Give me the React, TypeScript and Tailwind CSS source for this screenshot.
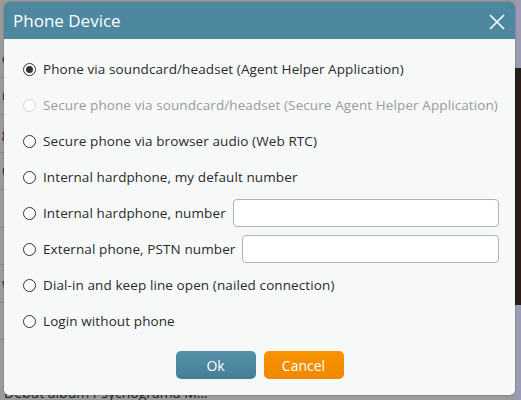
import { useState } from 'react'

interface Option {
  id: string
  label: string
  disabled?: boolean
  input?: string
}

const options: Option[] = [
  { id: 'helper', label: 'Phone via soundcard/headset (Agent Helper Application)' },
  { id: 'secure', label: 'Secure phone via soundcard/headset (Secure Agent Helper Application)', disabled: true },
  { id: 'webrtc', label: 'Secure phone via browser audio (Web RTC)' },
  { id: 'default', label: 'Internal hardphone, my default number' },
  { id: 'internal', label: 'Internal hardphone, number', input: 'ml-[7px]' },
  { id: 'pstn', label: 'External phone, PSTN number', input: 'ml-[7px]' },
  { id: 'nailed', label: 'Dial-in and keep line open (nailed connection)' },
  { id: 'none', label: 'Login without phone' },
]

function Radio({ checked, disabled }: { checked: boolean; disabled?: boolean }) {
  return (
    <span
      className={`w-[13px] h-[13px] rounded-full border flex items-center justify-center shrink-0 bg-white ${
        disabled ? 'border-[#d4d4d4]' : 'border-[#333]'
      }`}
    >
      {checked && <span className="w-[7px] h-[7px] rounded-full bg-[#333]" />}
    </span>
  )
}

export default function App() {
  const [selected, setSelected] = useState('helper')

  return (
    <div className="relative w-[521px] h-[400px] overflow-hidden bg-[#9b9b9b] font-['Open_Sans',sans-serif]">
      {/* dimmed page behind the dialog */}
      <div className="flex h-full">
        <div className="flex-1 flex flex-col pt-[40px] text-[13px] text-[#222]">
          {['e', 'r', 'g', 'u', '', '', 'w', ''].map((t, i) => (
            <div key={i} className="h-[38px] border-b border-[#8a8a8a] flex items-center px-[2px]">
              {t}
            </div>
          ))}
          <div className="pl-[4px] pt-[46px] text-[14px] text-[#222] leading-none">Debut album Psychograma  M...</div>
        </div>
        <div className="w-[6px] flex flex-col">
          <div className="h-[68px] bg-[#9b9bb4]" />
          <div className="h-[237px] bg-[#2a1e18]" />
          <div className="flex-1 bg-[#9b9bb4]" />
        </div>
      </div>

      {/* dialog */}
      <div className="absolute left-[4px] top-[2px] w-[511px] h-[393px] rounded-[5px] overflow-hidden bg-[#f7f9f9] shadow-[0_0_2px_rgba(0,0,0,0.4)] flex flex-col">
        <div className="h-[37px] bg-[#4d87a0] flex items-center justify-between pl-[9px] pr-[9px] shrink-0">
          <span className="text-white text-[17px] font-medium">Phone Device</span>
          <svg width="18" height="18" viewBox="0 0 18 18" className="mt-[2px]">
            <path d="M2 2 L16 16 M16 2 L2 16" stroke="white" strokeWidth="1.6" />
          </svg>
        </div>
        <div className="flex flex-col pt-[12px] px-[19px]">
          {options.map((o) => (
            <label
              key={o.id}
              className={`h-[36px] flex items-center text-[13.5px] tracking-[0.1px] ${
                o.disabled ? 'text-[#9a9a9a]' : 'text-[#2a2a2a] cursor-pointer'
              }`}
              onClick={() => !o.disabled && setSelected(o.id)}
            >
              <Radio checked={selected === o.id} disabled={o.disabled} />
              <span className="ml-[7px] whitespace-nowrap">{o.label}</span>
              {o.input && (
                <input
                  type="text"
                  className={`${o.input} flex-1 h-[28px] mr-[-3px] rounded-[4px] border border-[#aab4b8] bg-white outline-none`}
                />
              )}
            </label>
          ))}
        </div>
        <div className="flex justify-center gap-[8px] mt-[12px]">
          <button className="w-[80px] h-[28px] rounded-[5px] bg-gradient-to-b from-[#5591aa] to-[#467e96] text-white text-[14px]">
            Ok
          </button>
          <button className="w-[80px] h-[28px] rounded-[5px] bg-gradient-to-b from-[#f79400] to-[#ef8800] text-white text-[14px]">
            Cancel
          </button>
        </div>
      </div>
    </div>
  )
}
